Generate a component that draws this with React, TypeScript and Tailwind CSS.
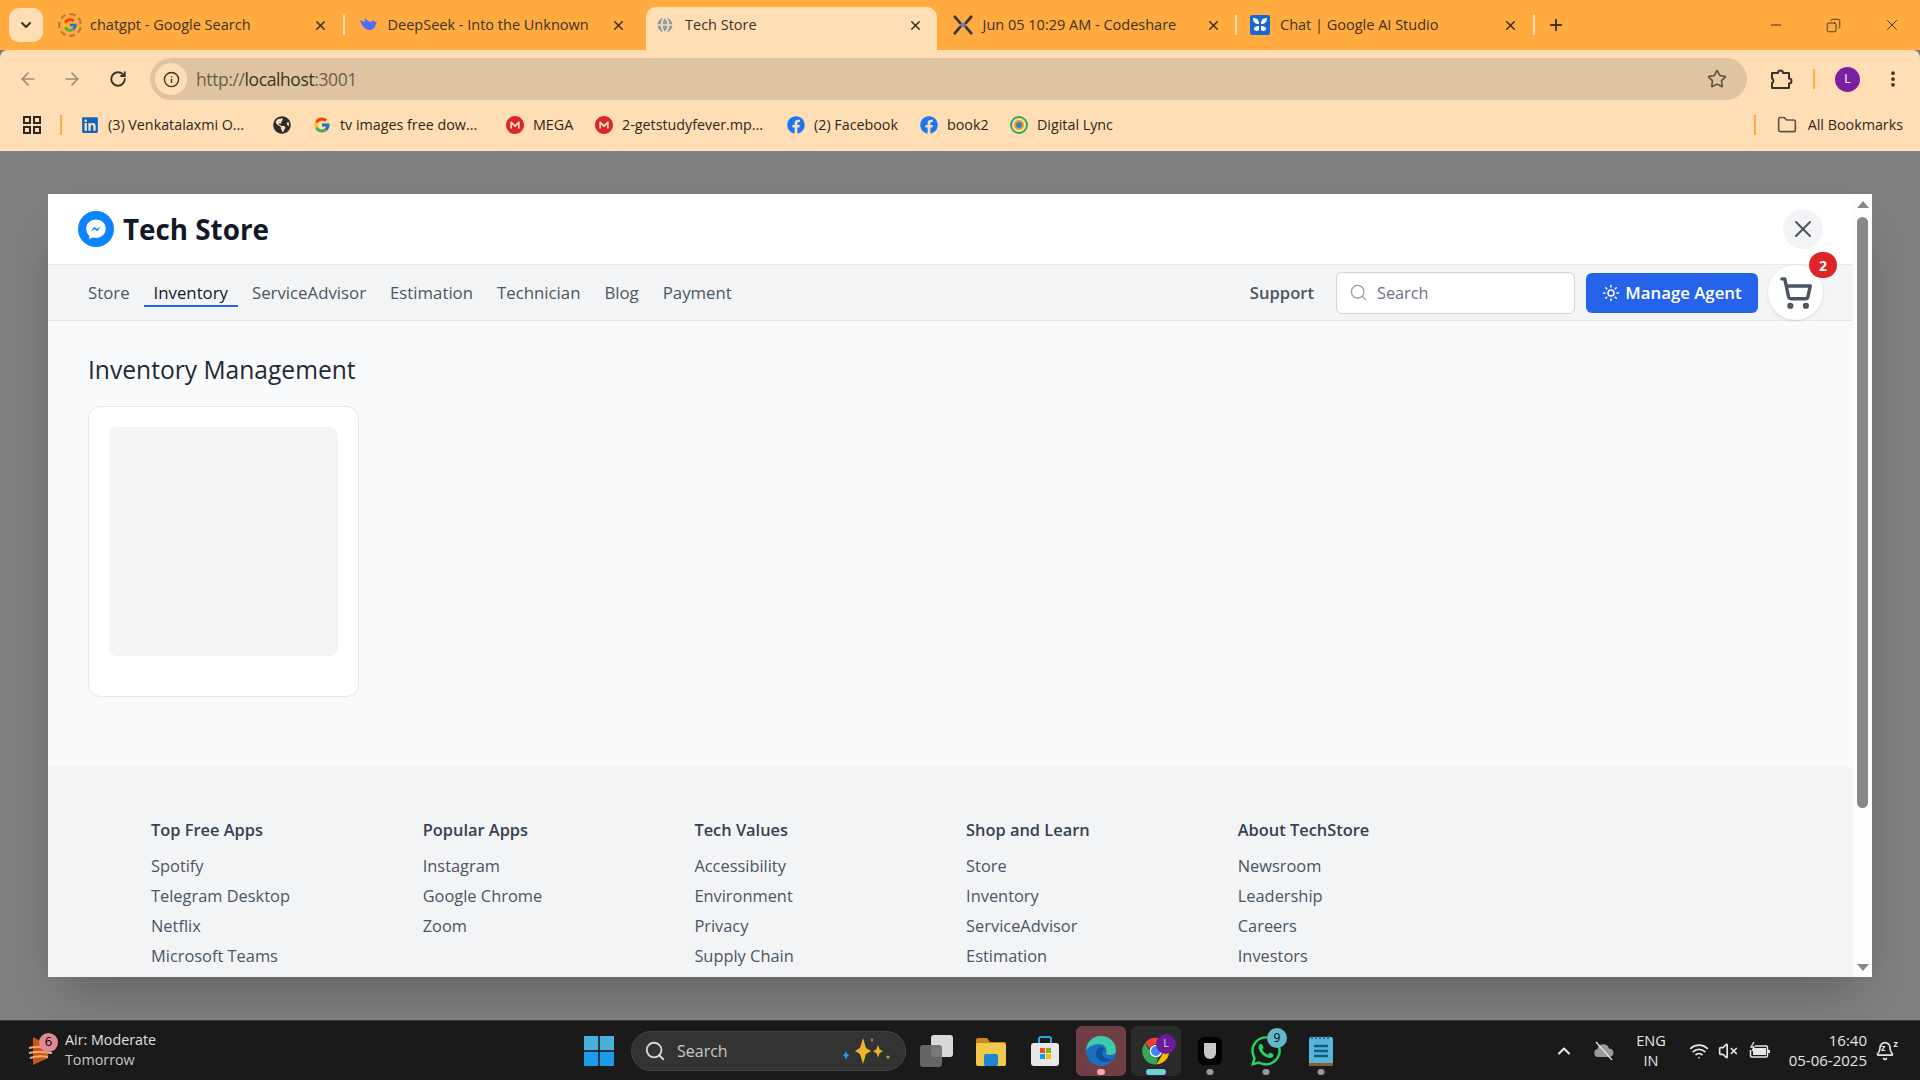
import { ArrowLeft, ArrowRight, RotateCw, Info, Star, MoreVertical, X, Plus, Search, ShoppingCart, Sun, Folder, Minus, Copy, ChevronDown, ChevronUp, Wifi, VolumeX, Bell, Globe } from "lucide-react"
import { FcGoogle } from "react-icons/fc"
import { FaFacebook, FaGlobeAmericas, FaLinkedin, FaWhatsapp } from "react-icons/fa"
import { SiMega } from "react-icons/si"

const ChromeLogo = ({ size = 20 }: { size?: number }) => (
  <svg width={size} height={size} viewBox="0 0 48 48">
    <path d="M24 4a20 20 0 0 1 17.3 10H24a10 10 0 0 0-9.3 6.3L7.5 11.9A20 20 0 0 1 24 4z" fill="#ea4335" />
    <path d="M41.3 14A20 20 0 0 1 25 44l8.6-15a10 10 0 0 0-1.2-15z" fill="#fbbc04" />
    <path d="M25 44A20 20 0 0 1 7.5 11.9l8.6 15A10 10 0 0 0 27 33.7z" fill="#34a853" />
    <circle cx="24" cy="24" r="8.5" fill="#4285f4" stroke="#fff" strokeWidth="2" />
  </svg>
)

const DeepSeekLogo = () => (
  <svg width="20" height="20" viewBox="0 0 24 24">
    <path d="M2 5c2 6 5 12 11 13 4 .6 7-2 8-6 1-2 1-3 2-4-2 1-3 0-4-1-2-1-3 0-3 2-3-1-6-3-8-6 0 2 0 3 1 5C6 8 4 7 2 5z" fill="#4d6bfe" />
  </svg>
)

const CodeshareLogo = () => (
  <svg width="22" height="22" viewBox="0 0 24 24" fill="none" stroke="#3a3a3a" strokeWidth="3" strokeLinecap="round">
    <path d="M3 3l6 7M21 3l-6 7M3 21l6-7M21 21l-6-7" />
    <circle cx="12" cy="12" r="2.4" fill="#5b7bd5" stroke="none" />
  </svg>
)

const AiStudioLogo = () => (
  <svg width="20" height="20" viewBox="0 0 20 20">
    <rect width="20" height="20" rx="2" fill="#1967d2" />
    <path d="M3 3c4 0 6 2 6 6-4 0-6-2-6-6zM17 3c-4 0-6 2-6 6 4 0 6-2 6-6zM9 11c-3 0-5 1-5 3 0 1.500 3 3 5 1zM11 11c3 0 5 1 5 3 0 1.500-3 3-5 1z" fill="#fff" />
  </svg>
)

const tabs = [
  { title: "chatgpt - Google Search", icon: <span className="flex size-6 items-center justify-center rounded-full border-2 border-dashed border-[#b9763a]"><FcGoogle size={16} /></span> },
  { title: "DeepSeek - Into the Unknown", icon: <DeepSeekLogo /> },
  { title: "Tech Store", icon: <Globe size={20} className="text-[#ffdeb5] fill-[#8e99a5]" />, active: true },
  { title: "Jun 05 10:29 AM - Codeshare", icon: <CodeshareLogo /> },
  { title: "Chat | Google AI Studio", icon: <AiStudioLogo /> },
]

const TabStrip = () => (
  <div className="flex h-[50px] items-end bg-[#ffab40] pl-[9px] text-[#3d3326]">
    <div className="mb-2 flex h-[34px] w-[34px] items-center justify-center rounded-[10px] bg-[#ffdeb5]">
      <ChevronDown size={16} strokeWidth={3} />
    </div>
    <div className="ml-1 flex">
      {tabs.map((t) => (
        <div key={t.title} className="relative isolate flex h-[43px] w-[297.5px] items-center pb-[7px]">
          {t.active && <span className="absolute inset-y-0 left-[4px] right-[3px] -z-10 rounded-t-[10px] bg-[#ffdeb5]" />}
          <div className="flex w-[43px] justify-center pl-[3px]">{t.icon}</div>
          <span className="text-[14.5px] whitespace-nowrap">{t.title}</span>
          <X size={15} strokeWidth={2.5} className="absolute left-[266px]" />
          {!t.active && t.title !== "DeepSeek - Into the Unknown" && (
            <span className="absolute right-0 h-[20px] w-[2px] bg-[#ffdeb5]" />
          )}
        </div>
      ))}
    </div>
    <div className="mb-[8px] ml-[12px] flex h-[34px] items-center">
      <Plus size={18} strokeWidth={2.5} />
    </div>
    <div className="mb-[8px] ml-auto flex h-[34px] items-center gap-[42px] pr-[19px]">
      <Minus size={16} strokeWidth={1.5} />
      <Copy size={15} strokeWidth={1.5} className="-scale-x-100" />
      <X size={18} strokeWidth={1.25} />
    </div>
  </div>
)

const Toolbar = () => (
  <div className="flex h-[56px] items-center rounded-t-[8px] bg-[#ffdeb5] pl-[18px] pr-[17px] pt-[2px] text-[#3d3326]">
    <ArrowLeft size={20} className="text-[#a08c73]" />
    <ArrowRight size={20} className="ml-[24px] text-[#a08c73]" />
    <RotateCw size={18} strokeWidth={2.5} className="ml-[27px]" />
    <div className="ml-[23px] flex h-[42px] w-[1597px] items-center rounded-full bg-[#dec4a0] pl-[5px] pr-[20px]">
      <div className="flex size-[32px] items-center justify-center rounded-full bg-[#ffdeb5]">
        <Info size={17} strokeWidth={2} />
      </div>
      <span className="ml-[9px] text-[17.5px] tracking-[-0.4px] text-[#6b5f50]">http://<span className="text-[#3d3326]">localhost</span>:3001</span>
      <Star size={20} className="ml-auto text-[#5f5548]" />
    </div>
    <svg width="24" height="24" viewBox="0 0 24 24" fill="none" stroke="currentColor" strokeWidth="2" strokeLinejoin="round" className="ml-[22px]">
      <path d="M3 6h6a2.500 2.500 0 0 1 5 0h6v5.500a2.500 2.500 0 0 1 0 5V21H3v-5a2.500 2.500 0 0 0 0-4.500V6z" />
    </svg>
    <span className="ml-[20px] h-[20px] w-[2px] bg-[#ffab40]" />
    <div className="ml-[20px] flex size-[25px] items-center justify-center rounded-full bg-[#7b1fa2] text-[12px] text-white">L</div>
    <MoreVertical size={20} strokeWidth={2.5} className="ml-[23px]" />
  </div>
)

const bookmarks = [
  { label: "(3) Venkatalaxmi O...", icon: <FaLinkedin size={18} className="text-[#0a66c2]" />, w: "w-[192px]" },
  { label: "", icon: <FaGlobeAmericas size={18} className="text-[#2b2b2b]" />, w: "w-[40px]" },
  { label: "tv images free dow...", icon: <FcGoogle size={18} />, w: "w-[193px]" },
  { label: "MEGA", icon: <SiMega size={18} className="text-[#d9272e]" />, w: "w-[89px]" },
  { label: "2-getstudyfever.mp...", icon: <SiMega size={18} className="text-[#d9272e]" />, w: "w-[192px]" },
  { label: "(2) Facebook", icon: <FaFacebook size={18} className="text-[#1877f2]" />, w: "w-[133px]" },
  { label: "book2", icon: <FaFacebook size={18} className="text-[#1877f2]" />, w: "w-[90px]" },
  {
    label: "Digital Lync",
    icon: <span className="flex size-[18px] items-center justify-center rounded-full border-2 border-[#34a853]"><span className="size-[10px] rounded-full border-2 border-[#f0a020] bg-[#3b82c4]" /></span>,
    w: "w-[110px]",
  },
]

const BookmarksBar = () => (
  <div className="flex h-[45px] items-start bg-[#ffdeb5] pl-[23px] text-[#2e261c]">
    <div className="flex h-[37px] items-center">
      <svg width="18" height="18" viewBox="0 0 18 18" fill="none" stroke="#2e261c" strokeWidth="2">
        <rect x="1" y="1" width="6" height="6" /><rect x="11" y="1" width="6" height="6" />
        <rect x="1" y="11" width="6" height="6" /><rect x="11" y="11" width="6" height="6" />
      </svg>
      <span className="ml-[19px] mr-[19px] h-[20px] w-[2px] bg-[#ffab40]" />
      {bookmarks.map((b, i) => (
        <div key={i} className={`flex items-center gap-[9px] ${b.w}`}>
          {b.icon}
          {b.label && <span className="text-[14.3px] whitespace-nowrap">{b.label}</span>}
        </div>
      ))}
    </div>
    <div className="ml-auto flex h-[37px] items-center pr-[17px]">
      <span className="h-[20px] w-[2px] bg-[#ffab40]" />
      <Folder size={20} className="ml-[21px] text-[#5f5548]" />
      <span className="ml-[11px] text-[14.3px]">All Bookmarks</span>
    </div>
  </div>
)

const MessengerLogo = () => (
  <svg width="36" height="36" viewBox="0 0 36 36">
    <circle cx="18" cy="18" r="18" fill="#0a84ff" />
    <path d="M18 8.500c-5.500 0-9.800 4-9.800 9.300 0 2.800 1.200 5.200 3 6.900v3.500l3.300-1.800c1.100.3 2.300.5 3.500.5 5.500 0 9.800-4 9.800-9.100S23.500 8.500 18 8.500z" fill="#fff" />
    <path d="M12.800 20.500l3.500-4.700 2.500 2.100 3.900-2.300-3.400 4.700-2.600-2.100z" fill="#0a84ff" />
  </svg>
)

const navLinks = ["Store", "Inventory", "ServiceAdvisor", "Estimation", "Technician", "Blog", "Payment"]

const footerCols = [
  { title: "Top Free Apps", items: ["Spotify", "Telegram Desktop", "Netflix", "Microsoft Teams"] },
  { title: "Popular Apps", items: ["Instagram", "Google Chrome", "Zoom"] },
  { title: "Tech Values", items: ["Accessibility", "Environment", "Privacy", "Supply Chain"] },
  { title: "Shop and Learn", items: ["Store", "Inventory", "ServiceAdvisor", "Estimation"] },
  { title: "About TechStore", items: ["Newsroom", "Leadership", "Careers", "Investors"] },
]

const Modal = () => (
  <div className="flex h-[783px] w-[1824px] overflow-hidden bg-white shadow-2xl">
    <div className="flex w-[1805px] flex-col">
      <div className="flex h-[70px] items-center justify-between pl-[30px] pr-[30px]">
        <div className="flex items-center gap-[9px]">
          <MessengerLogo />
          <h1 className="mt-[2px] text-[27.8px] font-bold text-[#111827]">Tech Store</h1>
        </div>
        <button className="flex size-10 items-center justify-center rounded-full bg-gray-100 text-gray-600">
          <X size={28} strokeWidth={1.75} />
        </button>
      </div>
      <div className="flex h-[57px] items-center border-y border-gray-200 bg-gray-100 pl-[40px] pr-[30px]">
        <nav className="mt-[2px] flex gap-[24px] text-[16.8px] font-medium text-[#4b5563]">
          {navLinks.map((l) =>
            l === "Inventory" ? (
              <a key={l} className="-mx-[10px] border-b-2 border-[#2563eb] px-[10px] text-gray-900">{l}</a>
            ) : (
              <a key={l}>{l}</a>
            ),
          )}
        </nav>
        <a className="ml-auto mt-[1px] text-[16.6px] font-semibold text-[#4b5563]">Support</a>
        <div className="ml-[22px] flex h-[42px] w-[239px] items-center gap-[9px] rounded-md border border-gray-300 bg-white px-[12px] text-gray-500">
          <Search size={19} strokeWidth={1.75} className="text-gray-400" />
          <span className="pt-[1px] text-[16.3px]">Search</span>
        </div>
        <button className="ml-[11px] flex h-[40px] w-[172px] items-center justify-center gap-[5px] rounded-md bg-[#2563eb] text-[16.8px] font-semibold text-white">
          <Sun size={18} />
          <span className="pt-[1px]">Manage Agent</span>
        </button>
        <div className="relative ml-[10px] flex size-[55px] items-center justify-center rounded-full bg-white shadow-sm">
          <ShoppingCart size={34} strokeWidth={2.4} className="text-[#4b5563]" />
          <span className="absolute -right-[14px] -top-[13px] flex h-[26px] w-[28px] items-center justify-center rounded-full bg-[#dc2626] text-[14px] font-bold text-white">2</span>
        </div>
      </div>
      <main className="h-[446px] shrink-0 bg-gray-50 pl-[40px] pt-[31px]">
        <h2 className="text-[24.6px] font-medium text-[#1f2937]">Inventory Management</h2>
        <div className="mt-[17px] h-[291px] w-[271px] rounded-xl border border-gray-200 bg-white p-[20px]">
          <div className="size-[229px] rounded-lg bg-gray-100" />
        </div>
      </main>
      <footer className="flex-1 bg-gray-100 pl-[103px] pt-[51px]">
        <div className="grid grid-cols-[repeat(5,271.7px)]">
          {footerCols.map((c) => (
            <div key={c.title}>
              <h3 className="text-[16.4px] leading-[24px] font-semibold text-[#374151]">{c.title}</h3>
              <ul className="mt-[12px] flex flex-col gap-[6px] text-[16.4px] leading-[24px] text-[#4b5563]">
                {c.items.map((i) => <li key={i}>{i}</li>)}
              </ul>
            </div>
          ))}
        </div>
      </footer>
    </div>
    <div className="flex w-[19px] flex-col items-center bg-[#fdfdfd] pt-[7px]">
      <span className="h-0 w-0 border-x-[6px] border-b-[7px] border-x-transparent border-b-[#888]" />
      <span className="mt-[9px] h-[591px] w-[11px] rounded-full bg-[#888]" />
      <span className="mt-auto mb-[6px] h-0 w-0 border-x-[6px] border-t-[7px] border-x-transparent border-t-[#888]" />
    </div>
  </div>
)

const WeatherIcon = () => (
  <div className="relative h-[30px] w-[25px]">
    <svg width="25" height="30" viewBox="0 0 25 30">
      <path d="M5 1l15 8v13L5 29z" fill="#c8561a" />
      <path d="M1 12c6-2 14-1 23 0M1 17c8-2 15-1 23 0M2 22c6-2 12-2 18-1" fill="none" stroke="#eda878" strokeWidth="2" />
    </svg>
    <span className="absolute -right-[5px] -top-[3px] flex size-[19px] items-center justify-center rounded-full bg-[#e08a96] text-[13px] text-black">6</span>
  </div>
)

const EdgeLogo = () => (
  <svg width="32" height="32" viewBox="0 0 32 32">
    <circle cx="16" cy="16" r="15" fill="#1b6ec2" />
    <path d="M1 16C1 7 8 1 16 1c8 0 15 6 15 14 0 3-2 5-6 5-3 0-4-1-4-2 2-6-3-9-7-9-6 0-11 3-13 7z" fill="#3ec9a7" />
    <path d="M13 13c-3 3-3 10 3 13 4 2 9 1 12-2-6 1-11-2-11-6 0-2 1-3 3-4-3-2-5-2-7-1z" fill="#0f4f9e" />
  </svg>
)

const StoreLogo = () => (
  <svg width="30" height="32" viewBox="0 0 30 32">
    <path d="M9 8V4a2 2 0 0 1 2-2h8a2 2 0 0 1 2 2v4" fill="none" stroke="#2aa4e0" strokeWidth="2" />
    <rect x="1" y="8" width="28" height="23" rx="3" fill="#e8e8e8" />
    <rect x="10" y="13" width="5" height="5" fill="#f25022" /><rect x="16" y="13" width="5" height="5" fill="#7fba00" />
    <rect x="10" y="19" width="5" height="5" fill="#00a4ef" /><rect x="16" y="19" width="5" height="5" fill="#ffb900" />
  </svg>
)

const Dot = ({ className }: { className: string }) => (
  <span className={`absolute bottom-[1px] left-1/2 h-[6px] -translate-x-1/2 rounded-full ${className}`} />
)

const Taskbar = () => (
  <div className="flex h-[60px] items-center border-t border-[#3a3a3a] bg-[#1a1a1a] text-white">
    <div className="flex w-[584px] shrink-0 items-center gap-[12px] pl-[28px]">
      <WeatherIcon />
      <div className="-mt-[2px] text-[14.3px] leading-[20px] text-[#e0e0e0]">
        <div>Air: Moderate</div>
        <div className="text-[#c8c8c8]">Tomorrow</div>
      </div>
    </div>
    <div className="flex items-center">
      <svg width="30" height="30" viewBox="0 0 30 30">
        <rect width="14.200" height="14.200" fill="#4ab0d9" /><rect x="15.800" width="14.200" height="14.200" fill="#4ab0d9" />
        <rect y="15.800" width="14.200" height="14.200" fill="#1c9be8" /><rect x="15.800" y="15.800" width="14.200" height="14.200" fill="#1c9be8" />
      </svg>
      <div className="ml-[17px] flex h-[40px] w-[275px] items-center rounded-full border border-[#444] bg-[#333] pl-[12px] pr-[12px]">
        <Search size={22} className="text-[#d8d8d8]" />
        <span className="ml-[11px] text-[16px] text-[#c8c8c8]">Search</span>
        <svg width="52" height="30" viewBox="0 0 52 30" className="ml-auto">
          <path d="M22 2l3 10 5 3-5 3-3 10-3-10-5-3 5-3z" fill="#f0b429" />
          <path d="M37 9l1.700 4.500 3.300 1.700-3.300 1.700-1.700 4.500-1.700-4.500-3.300-1.700 3.300-1.700z" fill="#f0b429" />
          <path d="M5 15l1.300 3 2.200 1.200-2.200 1.200L5 24l-1.300-3.600-2.200-1.200 2.200-1.200z" fill="#1c9be8" />
          <circle cx="47" cy="21" r="1.600" fill="#6fbf4a" /><circle cx="31" cy="4" r="1.400" fill="#d9653a" />
        </svg>
      </div>
      <div className="relative ml-[14px] h-[32px] w-[33px]">
        <span className="absolute right-0 top-0 size-[22px] rounded-[3px] bg-[#d8d8d8]" />
        <span className="absolute bottom-0 left-0 size-[22px] rounded-[3px] bg-[#6e6e6e]/90" />
      </div>
      <svg width="32" height="32" viewBox="0 0 32 32" className="ml-[22px]">
        <path d="M1 5a2 2 0 0 1 2-2h9l3 4h14a2 2 0 0 1 2 2v3H1z" fill="#c98a15" />
        <rect x="1" y="8" width="30" height="23" rx="2" fill="#f2c94c" />
        <rect x="9" y="19" width="14" height="12" rx="2" fill="#1c86d1" />
      </svg>
      <div className="ml-[23px] flex w-[30px] justify-center"><StoreLogo /></div>
      <div className="relative ml-[16px] flex size-[50px] items-center justify-center rounded-md bg-[#6f3f45]">
        <EdgeLogo />
        <Dot className="w-[8px] bg-[#f4a6b0]" />
      </div>
      <div className="relative ml-[5px] flex size-[50px] items-center justify-center rounded-md bg-[#2a2a2a]">
        <ChromeLogo size={32} />
        <span className="absolute right-[5px] top-[8px] flex size-[20px] items-center justify-center rounded-full bg-[#6a1b9a] text-[11px] text-[#ddd]">L</span>
        <Dot className="w-[20px] bg-[#6fd0dc]" />
      </div>
      <div className="relative ml-[17px] flex h-[50px] w-[24px] items-center justify-center">
        <div className="flex h-[28px] w-[24px] items-center justify-center rounded-md bg-black">
          <span className="h-[16px] w-[12px] rounded-b-full bg-[#c8c8c8]" />
        </div>
        <Dot className="w-[7px] bg-[#9a9a9a]" />
      </div>
      <div className="relative ml-[26px] flex h-[50px] w-[36px] items-center justify-center">
        <FaWhatsapp size={34} className="text-[#25d366]" />
        <span className="absolute -right-[3px] top-[2px] flex size-[20px] items-center justify-center rounded-full bg-[#62b8c8] text-[12px] text-black">9</span>
        <Dot className="w-[7px] bg-[#9a9a9a]" />
      </div>
      <div className="relative ml-[25px] flex h-[50px] w-[24px] items-center justify-center">
        <svg width="24" height="32" viewBox="0 0 24 32">
          <rect y="2" width="24" height="28" rx="2" fill="#58b4d8" />
          <rect y="28" width="24" height="3" fill="#8a5a2b" />
          <path d="M5 11h14M5 16h14M5 21h14" stroke="#0d5f80" strokeWidth="2.500" />
          <path d="M3 1v3M7 1v3M11 1v3M15 1v3M19 1v3" stroke="#0d5f80" strokeWidth="1.500" />
        </svg>
        <Dot className="w-[7px] bg-[#9a9a9a]" />
      </div>
    </div>
    <div className="ml-auto flex items-center pr-[25px] text-[#e6e6e6]">
      <ChevronUp size={20} strokeWidth={2.5} />
      <svg width="22" height="20" viewBox="0 0 22 20" className="ml-[19px]">
        <path d="M5 16a4 4 0 0 1-.6-7.900A6 6 0 0 1 16 7.500 4.300 4.300 0 0 1 17 16z" fill="#9a9a9a" />
        <path d="M3 1l16 18" stroke="#e6e6e6" strokeWidth="1.300" />
      </svg>
      <div className="ml-[19px] w-[34px] text-center text-[14.5px] leading-[20px]">ENG<br />IN</div>
      <Wifi size={20} className="ml-[21px]" />
      <VolumeX size={20} className="ml-[9px]" />
      <svg width="22" height="20" viewBox="0 0 22 20" fill="none" stroke="currentColor" strokeWidth="1.500" className="ml-[10px]">
        <path d="M7 5h11a1.500 1.500 0 0 1 1.500 1.500v8A1.500 1.500 0 0 1 18 16H4a1.500 1.500 0 0 1-1.500-1.500V9" />
        <path d="M5 7h13v7H5z" fill="currentColor" stroke="none" />
        <path d="M6 1L3 6h3l-2 4" strokeWidth="1.300" />
        <path d="M21 9v3" strokeWidth="2" />
      </svg>
      <div className="-mt-[2px] ml-[14px] w-[83px] text-right text-[15px] leading-[20px]">16:40<br />05-06-2025</div>
      <div className="relative ml-[8px]">
        <Bell size={20} />
        <span className="absolute left-[6px] top-[2px] text-[9px] leading-none font-bold">z</span>
        <span className="absolute right-[-3px] top-[-2px] text-[9px] leading-none font-bold">z</span>
      </div>
    </div>
  </div>
)

const App = () => {
  return (
    <div className="flex h-screen w-[1920px] flex-col overflow-hidden bg-[#808080] font-['Open_Sans','Noto_Sans',sans-serif]">
      <TabStrip />
      <Toolbar />
      <BookmarksBar />
      <div className="flex flex-1 flex-col px-[48px] pt-[43px]">
        <Modal />
      </div>
      <Taskbar />
    </div>
  )
}

export default App
